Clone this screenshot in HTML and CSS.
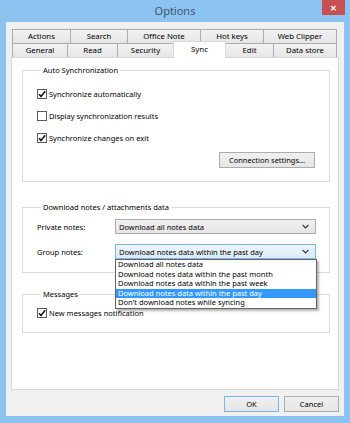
FILE: index.html
```html
<!DOCTYPE html>
<html>
<head>
	<meta charset="utf-8">
	<title>Options</title>
	<link rel="stylesheet" href="styles.css">
</head>
<body>
	<div class="window">
		<div class="titlebar">
			<span></span>
			<span class="title">Options</span>
			<span class="close-wrap"><span class="close">&#x2715;</span></span>
		</div>

		<div class="client">
			<div class="tabs">
				<div class="tab-row row-back">
					<div class="tab t-actions">Actions</div>
					<div class="tab t-search">Search</div>
					<div class="tab t-office">Office Note</div>
					<div class="tab t-hotkeys">Hot keys</div>
					<div class="tab t-clipper">Web Clipper</div>
				</div>
				<div class="tab-row row-front">
					<div class="tab t-general">General</div>
					<div class="tab t-read">Read</div>
					<div class="tab t-security">Security</div>
					<div class="tab t-sync active">Sync</div>
					<div class="tab t-edit">Edit</div>
					<div class="tab t-store">Data store</div>
				</div>
			</div>

			<div class="panel">
				<fieldset class="group group-auto">
					<legend>Auto Synchronization</legend>
					<div class="check-row">
						<span class="checkbox"><svg width="10" height="10" viewBox="0 0 10 10"><path d="M2 5.2 L4 7.4 L8.2 2.2" fill="none" stroke="#1a1a1a" stroke-width="1.6"/></svg></span>
						<span>Synchronize automatically</span>
					</div>
					<div class="check-row">
						<span class="checkbox"></span>
						<span>Display synchronization results</span>
					</div>
					<div class="check-row">
						<span class="checkbox"><svg width="10" height="10" viewBox="0 0 10 10"><path d="M2 5.2 L4 7.4 L8.2 2.2" fill="none" stroke="#1a1a1a" stroke-width="1.6"/></svg></span>
						<span>Synchronize changes on exit</span>
					</div>
					<div class="button-row">
						<button class="btn btn-conn">Connection settings...</button>
					</div>
				</fieldset>

				<fieldset class="group group-download">
					<legend>Download notes / attachments data</legend>
					<div class="field-row">
						<span class="field-label">Private notes:</span>
						<div class="combo-wrap">
							<div class="combo">
								<span>Download all notes data</span>
								<svg width="7" height="5" viewBox="0 0 7 5"><path d="M0.5 0.8 L3.5 3.8 L6.5 0.8" fill="none" stroke="#333" stroke-width="1.2"/></svg>
							</div>
						</div>
					</div>
					<div class="field-row">
						<span class="field-label">Group notes:</span>
						<div class="combo-wrap">
							<div class="combo focused">
								<span>Download notes data within the past day</span>
								<svg width="7" height="5" viewBox="0 0 7 5"><path d="M0.5 0.8 L3.5 3.8 L6.5 0.8" fill="none" stroke="#333" stroke-width="1.2"/></svg>
							</div>
							<ul class="dropdown">
								<li>Download all notes data</li>
								<li>Download notes data within the past month</li>
								<li>Download notes data within the past week</li>
								<li class="selected">Download notes data within the past day</li>
								<li>Don't download notes while syncing</li>
							</ul>
						</div>
					</div>
				</fieldset>

				<fieldset class="group group-messages">
					<legend>Messages</legend>
					<div class="check-row">
						<span class="checkbox"><svg width="10" height="10" viewBox="0 0 10 10"><path d="M2 5.2 L4 7.4 L8.2 2.2" fill="none" stroke="#1a1a1a" stroke-width="1.6"/></svg></span>
						<span>New messages notification</span>
					</div>
				</fieldset>
			</div>

			<div class="footer">
				<button class="btn btn-ok">OK</button>
				<button class="btn">Cancel</button>
			</div>
		</div>
	</div>
</body>
</html>
```

FILE: styles.css
```css
* {
	box-sizing: border-box;
}

body {
	margin: 0;
	background-color: #8cc3f0;
	font-family: "Noto Sans", sans-serif;
	font-size: 7.5px;
	color: #000;
}

.window {
	width: 350px;
	height: 423px;
}

.titlebar {
	height: 22px;
	display: grid;
	grid-template-columns: 1fr auto 1fr;
	align-items: start;
}

.title {
	font-size: 11px;
	line-height: 22px;
	color: #3b5671;
}

.close-wrap {
	display: flex;
	justify-content: flex-end;
	padding-right: 5px;
}

.close {
	width: 23px;
	height: 15px;
	background: #c75050;
	color: #fff;
	font-size: 8px;
	font-weight: bold;
	display: flex;
	align-items: center;
	justify-content: center;
}

.client {
	margin: 0 6px;
	height: 394px;
	background: #f0f0f0;
	padding: 7px 5px 0 5px;
}

/* tabs */

.tabs {
	margin-left: 1px;
	font-size: 7.8px;
}

.tab-row {
	display: flex;
	align-items: flex-start;
}

.tab {
	height: 14px;
	border: 1px solid #acacac;
	border-bottom: none;
	background: linear-gradient(#f2f2f2, #e6e6e6);
	margin-left: -1px;
	text-align: center;
	line-height: 13px;
	white-space: nowrap;
}

.tab:first-child {
	margin-left: 0;
}

.t-actions { width: 59px; }
.t-search { width: 58px; }
.t-office { width: 74px; }
.t-hotkeys { width: 64px; }
.t-clipper { width: 74px; }

.t-general { width: 56px; }
.t-read { width: 51px; }
.t-security { width: 57px; }
.t-sync { width: 53px; }
.t-edit { width: 49px; }
.t-store { width: 64px; }

.tab.active {
	height: 17px;
	margin-top: -2px;
	margin-bottom: -1px;
	background: #fff;
	border-color: #d9d9d9;
	line-height: 14px;
	z-index: 1;
}

/* panel */

.panel {
	height: 333px;
	background: #fff;
	border: 1px solid #d9d9d9;
	padding: 7px 8px 0 10px;
}

.group {
	margin: 0;
	border: 1px solid #dcdcdc;
	padding: 0;
}

.group legend {
	margin-left: 4px;
	padding: 0 2px;
	line-height: 11px;
}

.group-auto {
	padding: 7px 0 13px 14px;
}

.group-download {
	margin-top: 20px;
	padding: 6px 0 13px 14px;
}

.group-messages {
	margin-top: 16px;
	padding: 6px 0 12px 14px;
}

.check-row {
	height: 22px;
	display: flex;
	align-items: center;
	gap: 2px;
}

.group-messages .check-row {
	height: 14px;
}

.checkbox {
	width: 10px;
	height: 10px;
	border: 1px solid #5a5a5a;
	background: #fff;
	display: flex;
	align-items: center;
	justify-content: center;
}

.checkbox svg {
	flex: none;
}

.button-row {
	display: flex;
	justify-content: flex-end;
	padding-right: 14px;
	margin-top: 3px;
}

.btn {
	font-family: "Noto Sans", sans-serif;
	font-size: 7.5px;
	color: #000;
	height: 16px;
	padding: 0;
	border: 1px solid #acacac;
	background: linear-gradient(#f0f0f0, #e5e5e5);
}

.btn-conn {
	width: 96px;
}

.field-row {
	display: flex;
	align-items: center;
	height: 15px;
}

.field-row + .field-row {
	margin-top: 10px;
}

.field-label {
	width: 78px;
}

.combo-wrap {
	position: relative;
}

.combo {
	width: 201px;
	height: 15px;
	border: 1px solid #acacac;
	background: linear-gradient(#f0f0f0, #e5e5e5);
	display: flex;
	align-items: center;
	justify-content: space-between;
	padding: 0 6px 0 3px;
}

.combo.focused {
	border-color: #7eb4ea;
	background: linear-gradient(#ecf4fc, #dcecfc);
}

.dropdown {
	position: absolute;
	left: 0;
	top: 15px;
	width: 202px;
	margin: 0;
	padding: 0;
	list-style: none;
	background: #fff;
	border: 1px solid #646464;
	box-shadow: 2px 2px 2px rgba(0, 0, 0, 0.3);
	z-index: 2;
}

.dropdown li {
	line-height: 9.6px;
	padding-left: 2px;
	white-space: nowrap;
}

.dropdown li.selected {
	background: #3399ff;
	color: #fff;
}

/* footer */

.footer {
	display: flex;
	justify-content: flex-end;
	gap: 5px;
	margin-top: 6px;
}

.footer .btn {
	width: 55px;
}

.btn-ok {
	border-color: #7eb4ea;
}
```
